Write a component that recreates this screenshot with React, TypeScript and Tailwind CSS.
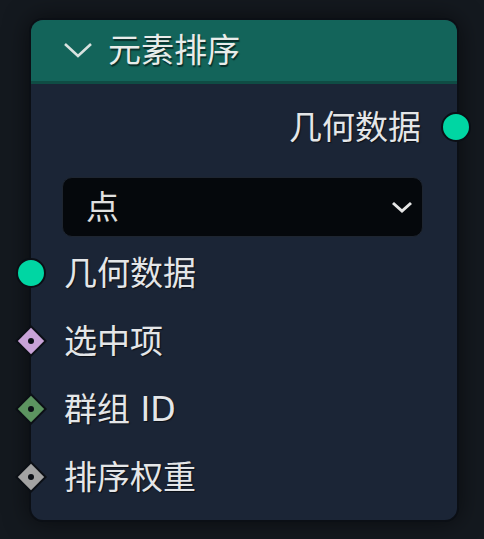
import React from "react";

const font = {
  fontFamily: '"DejaVu Sans", "Noto Sans CJK SC", sans-serif',
};

function Circle({ side }: { side: "left" | "right" }) {
  return (
    <div
      className={
        side === "left"
          ? "absolute left-[-15px] top-1/2 -translate-y-1/2 h-[30px] w-[30px] rounded-full border-[2px] border-[#0b0f15] bg-[#00d6a3]"
          : "absolute right-[-14px] top-1/2 -translate-y-1/2 h-[30px] w-[30px] rounded-full border-[2px] border-[#0b0f15] bg-[#00d6a3]"
      }
    />
  );
}

function Diamond({ color }: { color: string }) {
  return (
    <svg
      className="absolute left-[-17px] top-1/2 -translate-y-1/2"
      width="34"
      height="34"
      viewBox="0 0 34 34"
    >
      <path d="M17 1 L33 17 L17 33 L1 17 Z" fill="#0b0f15" />
      <path d="M17 3.8 L30.2 17 L17 30.2 L3.8 17 Z" fill={color} />
      <circle cx="17" cy="17" r="3" fill="#0b0f15" />
    </svg>
  );
}

function InputRow({
  label,
  socket,
}: {
  label: string;
  socket: React.ReactNode;
}) {
  return (
    <div className="relative flex h-[68px] items-center pl-[33px]">
      {socket}
      <span className="text-[33px] leading-none text-[#e4e6e8] [text-shadow:1px_1px_1px_rgba(0,0,0,0.6)]">
        {label}
      </span>
    </div>
  );
}

export default function App() {
  return (
    <div
      className="h-[539px] w-[484px] overflow-hidden bg-[#14191f] pl-[29px] pt-[18px]"
      style={font}
    >
      <div className="w-[430px] rounded-[14px] border-[2px] border-[#0b0f15] bg-[#1b2536] shadow-[0_0_24px_rgba(0,0,0,0.55)]">
        {/* header */}
        <div className="flex h-[64px] items-center gap-[15px] rounded-t-[12px] border-b-[3px] border-[#0f4c44] bg-[#13645a] pl-[32px]">
          <svg width="30" height="16" viewBox="0 0 30 16" className="mt-[-2px]">
            <path
              d="M2 2 L15 14 L28 2"
              fill="none"
              stroke="#d9e2df"
              strokeWidth="2.6"
            />
          </svg>
          <span className="mt-[-1px] text-[33px] leading-none text-[#e8ecea] [text-shadow:1px_2px_1px_rgba(0,0,0,0.55)]">
            元素排序
          </span>
        </div>

        {/* body */}
        <div className="pb-[9px] pt-[9px]">
          <div className="relative flex h-[68px] items-center justify-end pr-[36px]">
            <span className="text-[33px] leading-none text-[#e4e6e8] [text-shadow:1px_1px_1px_rgba(0,0,0,0.6)]">
              几何数据
            </span>
            <Circle side="right" />
          </div>

          <div className="ml-[31px] mr-[34px] mt-[16px] flex h-[60px] items-center justify-between rounded-[10px] border border-[#1e2530] bg-[#05080c] pl-[23px] pr-[9px]">
            <span className="text-[33px] leading-none text-[#e0e0e0]">点</span>
            <svg width="22" height="14" viewBox="0 0 22 14">
              <path
                d="M2 3 L11 11 L20 3"
                fill="none"
                stroke="#e6e6e6"
                strokeWidth="3"
              />
            </svg>
          </div>

          <div className="mt-[2px]">
            <InputRow label="几何数据" socket={<Circle side="left" />} />
            <InputRow label="选中项" socket={<Diamond color="#c9a3d8" />} />
            <InputRow label="群组 ID" socket={<Diamond color="#5c9460" />} />
            <InputRow label="排序权重" socket={<Diamond color="#a3a3a3" />} />
          </div>
        </div>
      </div>
    </div>
  );
}
